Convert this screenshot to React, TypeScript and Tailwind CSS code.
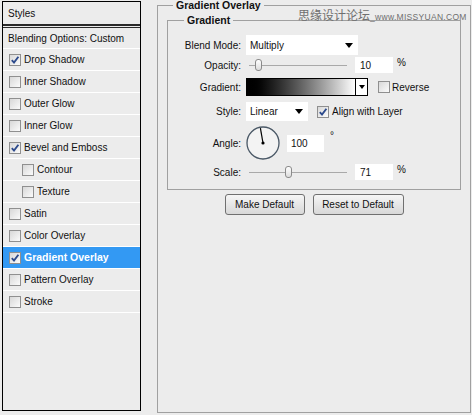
import React from "react";

const items: { label: string; checked: boolean; indent?: boolean; active?: boolean }[] = [
  { label: "Drop Shadow", checked: true },
  { label: "Inner Shadow", checked: false },
  { label: "Outer Glow", checked: false },
  { label: "Inner Glow", checked: false },
  { label: "Bevel and Emboss", checked: true },
  { label: "Contour", checked: false, indent: true },
  { label: "Texture", checked: false, indent: true },
  { label: "Satin", checked: false },
  { label: "Color Overlay", checked: false },
  { label: "Gradient Overlay", checked: true, active: true },
  { label: "Pattern Overlay", checked: false },
  { label: "Stroke", checked: false },
];

function Check({ checked }: { checked: boolean }) {
  return (
    <span className="w-[12px] h-[12px] border border-[#8f8f8f] bg-gradient-to-br from-[#d8d8d8] to-[#fbfbfb] flex items-center justify-center shrink-0">
      {checked && (
        <svg width="10" height="10" viewBox="0 0 10 10">
          <path d="M1.8 5.2 L4 7.6 L8.4 1.8" stroke="#2c4a8c" strokeWidth="1.9" fill="none" />
        </svg>
      )}
    </span>
  );
}

function Arrow() {
  return (
    <svg width="8" height="5" viewBox="0 0 8 5">
      <polygon points="0,0 8,0 4,5" fill="#000" />
    </svg>
  );
}

function Slider({ pos }: { pos: number }) {
  return (
    <div className="relative w-[102px] h-full flex items-center">
      <div className="ml-[3px] w-[98px] h-px bg-[#a9a9a9]" />
      <div className="absolute top-[2px] w-[7px] h-[12px] border border-[#8a8a8a] rounded-[3px] bg-gradient-to-b from-white to-[#dcdcdc]" style={{ left: pos }} />
    </div>
  );
}

function Label({ children }: { children: React.ReactNode }) {
  return <div className="w-[73px] mr-[5px] text-right shrink-0">{children}</div>;
}

export default function App() {
  return (
    <div className="relative w-[472px] h-[415px] bg-[#ececec] flex font-['Liberation_Sans',Arial,sans-serif] text-[10px] text-[#111]">
      <div className="ml-[2px] mt-[1px] w-[139px] h-[410px] border border-black flex flex-col">
        <div className="h-[22px] pl-[5px] flex items-center">Styles</div>
        <div className="h-[4px] border-t-2 border-b border-[#2a2a2a]" />
        <div className="h-[21px] pl-[5px] flex items-center border-b border-white">Blending Options: Custom</div>
        {items.map((it) => (
          <div
            key={it.label}
            className={`h-[22px] flex items-center border-b border-white ${it.indent ? "pl-[19px]" : "pl-[6px]"} ${it.active ? "bg-[#3399f3] text-white font-bold text-[10.5px]" : ""}`}
          >
            <Check checked={it.checked} />
            <span className="ml-[3px]">{it.label}</span>
          </div>
        ))}
      </div>

      <fieldset className="ml-[16px] w-[314px] h-[413px] border border-[#a0a0a0] px-[9px]">
        <legend className="ml-[6px] px-[3px] font-bold text-[10.5px] leading-[11px]">Gradient Overlay</legend>
        <fieldset className="mt-[4px] border border-[#a0a0a0] pt-[9px] pb-[9px]">
          <legend className="ml-[16px] px-[3px] font-bold text-[10.5px] leading-[11px]">Gradient</legend>

          <div className="h-[20px] flex items-center">
            <Label>Blend Mode:</Label>
            <div className="w-[112px] h-[20px] bg-white flex items-center justify-between pl-[4px] pr-[5px]">
              <span>Multiply</span>
              <Arrow />
            </div>
          </div>

          <div className="mt-[2px] h-[16px] flex items-center">
            <Label>Opacity:</Label>
            <Slider pos={9} />
            <div className="ml-[7px] w-[38px] h-[16px] bg-white pl-[5px] flex items-center">10</div>
            <span className="ml-[4px] self-start -mt-[2px]">%</span>
          </div>

          <div className="mt-[5px] h-[18px] flex items-center">
            <Label>Gradient:</Label>
            <div className="w-[110px] h-[18px] border border-black bg-gradient-to-r from-black to-white" />
            <div className="w-[12px] h-[18px] border border-l-0 border-black bg-white flex items-center justify-center">
              <svg width="6" height="4" viewBox="0 0 6 4"><polygon points="0,0 6,0 3,4" fill="#000" /></svg>
            </div>
            <div className="ml-[10px]"><Check checked={false} /></div>
            <span className="ml-[2px]">Reverse</span>
          </div>

          <div className="mt-[6px] h-[19px] flex items-center">
            <Label>Style:</Label>
            <div className="w-[62px] h-[19px] bg-white flex items-center justify-between pl-[4px] pr-[5px]">
              <span>Linear</span>
              <Arrow />
            </div>
            <div className="ml-[9px]"><Check checked={true} /></div>
            <span className="ml-[3px]">Align with Layer</span>
          </div>

          <div className="mt-[5px] h-[34px] flex items-center">
            <Label>Angle:</Label>
            <svg width="34" height="34" viewBox="0 0 34 34">
              <circle cx="17" cy="17" r="16" fill="#f3f3f3" stroke="#4a5866" strokeWidth="1.3" />
              <line x1="17" y1="17" x2="14.4" y2="2.2" stroke="#000" strokeWidth="1.2" />
              <circle cx="17" cy="17" r="1.6" fill="#000" />
            </svg>
            <div className="ml-[7px] w-[37px] h-[17px] bg-white pl-[4px] flex items-center">100</div>
            <span className="ml-[6px] self-start mt-[2px]">°</span>
          </div>

          <div className="mt-[4px] h-[16px] flex items-center">
            <Label>Scale:</Label>
            <Slider pos={39} />
            <div className="ml-[7px] w-[38px] h-[16px] bg-white pl-[5px] flex items-center">71</div>
            <span className="ml-[4px] self-start -mt-[2px]">%</span>
          </div>
        </fieldset>

        <div className="mt-[4px] flex justify-center gap-[8px]">
          <button className="w-[80px] h-[21px] border border-[#707070] rounded-[3px] bg-gradient-to-b from-[#f6f6f6] to-[#d8d8d8] text-[10px]">Make Default</button>
          <button className="w-[91px] h-[21px] border border-[#707070] rounded-[3px] bg-gradient-to-b from-[#f6f6f6] to-[#d8d8d8] text-[10px]">Reset to Default</button>
        </div>
      </fieldset>

      <div className="absolute left-[298px] top-[9px] flex items-end text-[#6f6f6f] leading-none">
        <span className="text-[12px] font-['Noto_Sans_CJK_SC',sans-serif]">思缘设计论坛</span>
        <span className="text-[8.5px] tracking-[0.3px] font-['Liberation_Sans',sans-serif]">_www.MISSYUAN.COM</span>
      </div>
    </div>
  );
}
